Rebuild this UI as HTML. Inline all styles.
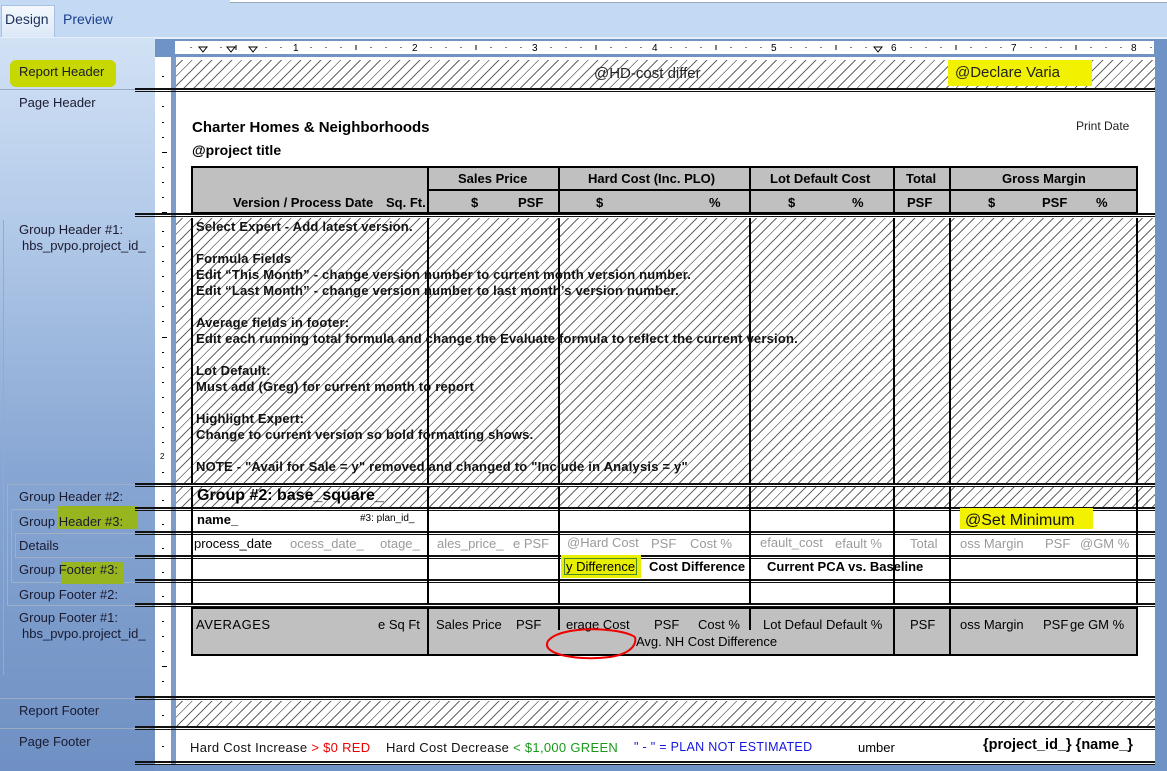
<!DOCTYPE html>
<html><head><meta charset="utf-8"><style>
*{margin:0;padding:0;box-sizing:border-box}
body{width:1167px;height:771px;overflow:hidden;position:relative;font-family:"Liberation Sans",sans-serif;background:#7093c6}
.a{position:absolute}
.left{left:0;top:38px;width:155px;height:733px;background:linear-gradient(180deg,#d2e2f5 0%,#b3cae9 25%,#86a5d2 60%,#6f90c3 100%)}
.lbl{position:absolute;left:19px;font-size:13px;color:#1a1a30;white-space:nowrap}
.hatch{background:repeating-linear-gradient(135deg,#fff 0 4px,#666 4px 5px,#fff 5px 7px)}
.sep{position:absolute;left:135px;width:1020px;height:4px;border-top:2px solid #111;border-bottom:1px solid #111}
.v{position:absolute;width:2px;background:#000}
.b{font-weight:bold}
.t{position:absolute;font-size:13px;white-space:nowrap;color:#000}
.g{position:absolute;font-size:13px;white-space:nowrap;color:#9a9a9a}
.dot{position:absolute;left:162px;width:2px;height:1px;background:#000}
</style></head><body>
<div class="a" style="left:0;top:0;width:1167px;height:38px;background:#c4d9f3"></div>
<div class="a" style="left:230px;top:0;width:1005px;height:3px;background:#fff;border-bottom:1px solid #9ab"></div>
<div class="a" style="left:1px;top:5px;width:54px;height:33px;background:linear-gradient(#f4f8fd,#dbe8f7);border:1px solid #a9c1e0;border-bottom:none"></div>
<div class="a" style="left:5px;top:11px;font-size:14px;color:#1b2f5a">Design</div>
<div class="a" style="left:63px;top:11px;font-size:14px;color:#1b3f8a">Preview</div>
<div class="a" style="left:0;top:37px;width:1167px;height:2px;background:#e6eefa"></div>
<div class="left a"></div>
<div class="a" style="left:10px;top:60px;width:106px;height:27px;background:#c6d800;border-radius:6px"></div>
<div class="a" style="left:0;top:89px;width:150px;height:1px;background:#9aaac0"></div>
<div class="lbl" style="top:64px">Report Header</div>
<div class="lbl" style="top:95px">Page Header</div>
<div class="a" style="left:3px;top:220px;width:1px;height:455px;background:#9ab"></div>
<div class="lbl" style="top:222px">Group Header #1:</div>
<div class="lbl" style="top:238px;left:22px">hbs_pvpo.project_id_</div>
<div class="a" style="left:7px;top:484px;width:145px;height:122px;border:1px solid #9eb0c8;border-right:none"></div>
<div class="a" style="left:11px;top:509px;width:141px;height:74px;border:1px solid #9eb0c8;border-right:none"></div>
<div class="a" style="left:15px;top:533px;width:137px;height:25px;border:1px solid #9eb0c8;border-right:none"></div>
<div class="a" style="left:58px;top:506px;width:80px;height:23px;background:#9ab800;opacity:.85"></div>
<div class="a" style="left:61px;top:562px;width:63px;height:22px;background:#9ab800;opacity:.85"></div>
<div class="lbl" style="top:489px">Group Header #2:</div>
<div class="lbl" style="top:514px">Group Header #3:</div>
<div class="lbl" style="top:538px">Details</div>
<div class="lbl" style="top:562px">Group Footer #3:</div>
<div class="lbl" style="top:587px">Group Footer #2:</div>
<div class="lbl" style="top:610px">Group Footer #1:</div>
<div class="lbl" style="top:626px;left:22px">hbs_pvpo.project_id_</div>
<div class="a" style="left:0;top:698px;width:150px;height:1px;background:#9aaac0"></div>
<div class="a" style="left:0;top:728px;width:150px;height:1px;background:#9aaac0"></div>
<div class="lbl" style="top:703px">Report Footer</div>
<div class="lbl" style="top:734px">Page Footer</div>
<div class="a" style="left:175px;top:41px;width:979px;height:13px;background:#fff"></div>
<svg class="a" style="left:0;top:0" width="1167" height="60">
<g fill="#000" font-family="Liberation Sans" font-size="10">
<text x="293" y="51">1</text><text x="412" y="51">2</text><text x="532" y="51">3</text><text x="652" y="51">4</text><text x="771" y="51">5</text><text x="891" y="51">6</text><text x="1011" y="51">7</text><text x="1131" y="51">8</text>
</g>
<g stroke="#000" stroke-width="1">
<path d="M191 47v1M206 47v1M221 47v1M236 47v1M251 47v1M266 47v1M281 47v1M311 47v1M326 47v1M341 47v1M371 47v1M386 47v1M401 47v1M431 47v1M446 47v1M461 47v1M491 47v1M506 47v1M521 47v1M551 47v1M566 47v1M581 47v1M611 47v1M626 47v1M641 47v1M671 47v1M686 47v1M701 47v1M731 47v1M746 47v1M761 47v1M791 47v1M806 47v1M821 47v1M851 47v1M866 47v1M881 47v1M911 47v1M926 47v1M941 47v1M971 47v1M986 47v1M1001 47v1M1031 47v1M1046 47v1M1061 47v1M1091 47v1M1106 47v1M1121 47v1M1151 47v1"/>
<path d="M236 45v5M356 45v5M476 45v5M596 45v5M716 45v5M836 45v5M956 45v5M1076 45v5"/>
<path d="M199 47h8l-4 5z M227 47h8l-4 5z M249 47h8l-4 5z M874 47h8l-4 5z" fill="#fff"/>
</g>
</svg>
<div class="a" style="left:155px;top:57px;width:16px;height:708px;background:#fff"></div>
<div class="a" style="left:171px;top:57px;width:5px;height:708px;background:#7c9bc8"></div>
<div class="a" style="left:176px;top:57px;width:979px;height:708px;background:#fff"></div>
<div class="a hatch" style="left:176px;top:60px;width:979px;height:28px"></div>
<div class="a hatch" style="left:176px;top:218px;width:979px;height:265px"></div>
<div class="a hatch" style="left:176px;top:487px;width:979px;height:20px"></div>
<div class="a hatch" style="left:176px;top:701px;width:979px;height:25px"></div>
<div class="sep" style="top:88px"></div>
<div class="sep" style="top:213px"></div>
<div class="sep" style="top:483px"></div>
<div class="sep" style="top:507px"></div>
<div class="sep" style="top:531px"></div>
<div class="sep" style="top:555px"></div>
<div class="sep" style="top:579px"></div>
<div class="sep" style="top:603px"></div>
<div class="sep" style="top:696px"></div>
<div class="sep" style="top:726px"></div>
<div class="sep" style="top:761px"></div>
<div class="dot" style="top:76px"></div><div class="dot" style="top:106px"></div><div class="dot" style="top:122px"></div><div class="dot" style="top:137px"></div><div class="dot" style="top:152px;width:5px"></div><div class="dot" style="top:167px"></div><div class="dot" style="top:182px"></div><div class="dot" style="top:197px"></div><div class="dot" style="top:212px;width:5px"></div>
<div class="dot" style="top:231px"></div><div class="dot" style="top:246px"></div><div class="dot" style="top:261px"></div><div class="dot" style="top:276px"></div><div class="dot" style="top:291px"></div><div class="dot" style="top:306px"></div><div class="dot" style="top:321px"></div><div class="dot" style="top:337px;width:5px"></div><div class="dot" style="top:352px"></div><div class="dot" style="top:367px"></div><div class="dot" style="top:382px"></div><div class="dot" style="top:397px"></div><div class="dot" style="top:412px"></div><div class="dot" style="top:427px"></div><div class="dot" style="top:442px"></div><div class="t" style="left:160px;top:452px;font-size:8px">2</div><div class="dot" style="top:472px"></div>
<div class="dot" style="top:500px"></div><div class="dot" style="top:524px"></div><div class="dot" style="top:548px"></div><div class="dot" style="top:572px"></div><div class="dot" style="top:596px"></div><div class="dot" style="top:621px"></div><div class="dot" style="top:636px"></div><div class="dot" style="top:651px"></div><div class="dot" style="top:666px;width:5px"></div><div class="dot" style="top:681px"></div><div class="dot" style="top:715px"></div><div class="dot" style="top:746px"></div>
<div class="t" style="left:594px;top:65px;font-size:15px;color:#222">@HD-cost differ</div>
<div class="a" style="left:948px;top:60px;width:144px;height:26px;background:#f2f200"></div>
<div class="t" style="left:955px;top:64px;font-size:15px;color:#222">@Declare Varia</div>
<div class="t b" style="left:192px;top:119px;font-size:15px">Charter Homes &amp; Neighborhoods</div>
<div class="t b" style="left:192px;top:142px;font-size:14px">@project title</div>
<div class="t" style="left:1076px;top:119px;font-size:12px;color:#222">Print Date</div>
<div class="a" style="left:191px;top:166px;width:947px;height:48px;background:#c0c0c0;border:2px solid #000"></div>
<div class="a" style="left:428px;top:189px;width:709px;height:2px;background:#000"></div>
<div class="v" style="left:427px;top:166px;height:48px"></div>
<div class="v" style="left:558px;top:166px;height:48px"></div>
<div class="v" style="left:749px;top:166px;height:48px"></div>
<div class="v" style="left:893px;top:166px;height:48px"></div>
<div class="v" style="left:949px;top:166px;height:48px"></div>
<div class="t b" style="left:233px;top:195px">Version / Process Date</div>
<div class="t b" style="left:386px;top:195px">Sq. Ft.</div>
<div class="t b" style="left:458px;top:171px">Sales Price</div>
<div class="t b" style="left:588px;top:171px">Hard Cost (Inc. PLO)</div>
<div class="t b" style="left:770px;top:171px">Lot Default Cost</div>
<div class="t b" style="left:906px;top:171px">Total</div>
<div class="t b" style="left:1002px;top:171px">Gross Margin</div>
<div class="t b" style="left:471px;top:195px">$</div><div class="t b" style="left:518px;top:195px">PSF</div>
<div class="t b" style="left:596px;top:195px">$</div><div class="t b" style="left:709px;top:195px">%</div>
<div class="t b" style="left:788px;top:195px">$</div><div class="t b" style="left:852px;top:195px">%</div>
<div class="t b" style="left:907px;top:195px">PSF</div>
<div class="t b" style="left:988px;top:195px">$</div><div class="t b" style="left:1042px;top:195px">PSF</div><div class="t b" style="left:1096px;top:195px">%</div>
<div class="v" style="left:191px;top:218px;height:265px"></div>
<div class="v" style="left:427px;top:218px;height:265px"></div>
<div class="v" style="left:558px;top:218px;height:265px"></div>
<div class="v" style="left:749px;top:218px;height:265px"></div>
<div class="v" style="left:893px;top:218px;height:265px"></div>
<div class="v" style="left:949px;top:218px;height:265px"></div>
<div class="v" style="left:1136px;top:218px;height:265px"></div>
<div class="t b" style="left:196px;top:219px;line-height:16px;color:#111;letter-spacing:.2px">Select Expert - Add latest version.<br><br>Formula Fields<br>Edit “This Month” - change version number to current month version number.<br>Edit “Last Month” - change version number to last month’s version number.<br><br>Average fields in footer:<br>Edit each running total formula and change the Evaluate formula to reflect the current version.<br><br>Lot Default:<br>Must add (Greg) for current month to report<br><br>Highlight Expert:<br>Change to current version so bold formatting shows.<br><br>NOTE - "Avail for Sale = y" removed and changed to "Include in Analysis = y"</div>
<div class="v" style="left:191px;top:487px;height:117px"></div>
<div class="v" style="left:427px;top:487px;height:117px"></div>
<div class="v" style="left:558px;top:487px;height:117px"></div>
<div class="v" style="left:749px;top:487px;height:117px"></div>
<div class="v" style="left:893px;top:487px;height:117px"></div>
<div class="v" style="left:949px;top:487px;height:117px"></div>
<div class="v" style="left:1136px;top:487px;height:117px"></div>
<div class="t b" style="left:197px;top:487px;font-size:16px">Group #2: base_square_</div>
<div class="t b" style="left:197px;top:512px">name_</div>
<div class="t" style="left:360px;top:513px;font-size:10px">#3: plan_id_</div>
<div class="a" style="left:960px;top:508px;width:133px;height:21px;background:#f2f200"></div>
<div class="t" style="left:965px;top:512px;font-size:16px;color:#111">@Set Minimum</div>
<div class="t" style="left:194px;top:536px;font-size:13px">process_date</div>
<div class="g" style="left:290px;top:536px">ocess_date_</div><div class="g" style="left:380px;top:536px">otage_</div>
<div class="g" style="left:437px;top:536px">ales_price_</div><div class="g" style="left:513px;top:536px">e PSF</div>
<div class="g" style="left:567px;top:535px">@Hard Cost</div><div class="g" style="left:651px;top:536px">PSF</div><div class="g" style="left:690px;top:536px">Cost %</div>
<div class="g" style="left:760px;top:535px">efault_cost</div><div class="g" style="left:835px;top:536px">efault %</div>
<div class="g" style="left:910px;top:536px">Total</div>
<div class="g" style="left:960px;top:536px">oss Margin</div><div class="g" style="left:1045px;top:536px">PSF</div><div class="g" style="left:1080px;top:536px">@GM %</div>
<div class="a" style="left:561px;top:555px;width:80px;height:23px;background:#e8f000"></div>
<div class="a" style="left:564px;top:558px;width:73px;height:17px;border:1px solid #4a8a20"></div>
<div class="t" style="left:566px;top:559px;font-size:13px">y Difference</div>
<div class="t b" style="left:649px;top:559px">Cost Difference</div>
<div class="t b" style="left:767px;top:559px">Current PCA vs. Baseline</div>
<div class="a" style="left:191px;top:607px;width:947px;height:49px;background:#c0c0c0;border:2px solid #000"></div>
<div class="v" style="left:427px;top:607px;height:49px"></div>
<div class="v" style="left:558px;top:607px;height:23px"></div>
<div class="v" style="left:749px;top:607px;height:23px"></div>
<div class="v" style="left:893px;top:607px;height:49px"></div>
<div class="v" style="left:949px;top:607px;height:49px"></div>
<div class="t" style="left:196px;top:617px;font-size:13px;letter-spacing:.5px">AVERAGES</div>
<div class="t" style="left:378px;top:617px;font-size:13px">e Sq Ft</div>
<div class="t" style="left:436px;top:617px;font-size:13px">Sales Price</div><div class="t" style="left:516px;top:617px;font-size:13px">PSF</div>
<div class="t" style="left:566px;top:617px;font-size:13px">erage Cost</div><div class="t" style="left:654px;top:617px;font-size:13px">PSF</div><div class="t" style="left:698px;top:617px;font-size:13px">Cost %</div>
<div class="t" style="left:763px;top:617px;font-size:13px">Lot Defaul</div><div class="t" style="left:826px;top:617px;font-size:13px">Default %</div>
<div class="t" style="left:910px;top:617px;font-size:13px">PSF</div>
<div class="t" style="left:960px;top:617px;font-size:13px">oss Margin</div><div class="t" style="left:1043px;top:617px;font-size:13px">PSF</div><div class="t" style="left:1070px;top:617px;font-size:13px">ge GM %</div>
<div class="t" style="left:636px;top:634px;font-size:13px">Avg. NH Cost Difference</div>
<svg class="a" style="left:540px;top:625px" width="110" height="40"><path d="M95 12C80 2 20 0 8 16C0 30 40 36 70 32C90 29 97 20 95 12" fill="none" stroke="#e00" stroke-width="2"/></svg>
<div class="t" style="left:190px;top:740px;font-size:13px;color:#111;letter-spacing:.3px">Hard Cost Increase <span style="color:#e00">&gt; $0 RED</span></div>
<div class="t" style="left:386px;top:740px;font-size:13px;color:#111;letter-spacing:.3px">Hard Cost Decrease <span style="color:#1a9a1a">&lt; $1,000 GREEN</span></div>
<div class="t" style="left:634px;top:740px;font-size:12.5px;color:#1515e0;letter-spacing:.3px">" - " = PLAN NOT ESTIMATED</div>
<div class="t" style="left:858px;top:740px;font-size:13px">umber</div>
<div class="t b" style="left:983px;top:737px;font-size:14.5px">{project_id_} {name_}</div>
</body></html>
